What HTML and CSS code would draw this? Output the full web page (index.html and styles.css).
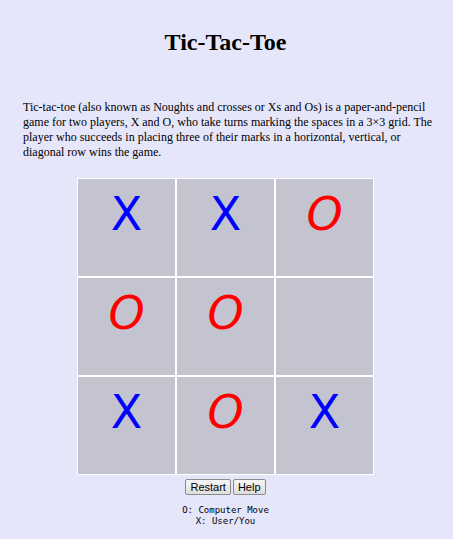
FILE: index.html
```html
<!DOCTYPE html>
<html>
<head>
<meta charset="utf-8">
<title>Tic-Tac-Toe</title>
<link rel="stylesheet" href="styles.css">
</head>
<body>
<h1 class="title">Tic-Tac-Toe</h1>
<p class="intro">Tic-tac-toe (also known as Noughts and crosses or Xs and Os) is a paper-and-pencil game for two players, X and O, who take turns marking the spaces in a 3×3 grid. The player who succeeds in placing three of their marks in a horizontal, vertical, or diagonal row wins the game.</p>
<div class="board">
  <div class="cell x">X</div>
  <div class="cell x">X</div>
  <div class="cell o">O</div>
  <div class="cell o">O</div>
  <div class="cell o">O</div>
  <div class="cell"></div>
  <div class="cell x">X</div>
  <div class="cell o">O</div>
  <div class="cell x">X</div>
</div>
<div class="controls">
  <button class="btn" type="button">Restart</button>
  <button class="btn" type="button">Help</button>
</div>
<div class="legend">
  <div>O: Computer Move</div>
  <div>X: User/You</div>
</div>
</body>
</html>
```
FILE: styles.css
```css
html {
  background: #e6e6fa;
}
body {
  margin: 0;
  padding: 8px 25px 8px 23px;
  font-family: "Liberation Serif", "Times New Roman", serif;
  font-size: 12px;
  color: #000;
  background: #e6e6fa;
}
.title {
  font-size: 24px;
  line-height: 30px;
  font-weight: bold;
  text-align: center;
  margin: 19px 0 43px;
}
.intro {
  margin: 0 -9px 18px 0;
  line-height: 15px;
}
.board {
  display: grid;
  grid-template-columns: repeat(3, 97px);
  grid-template-rows: repeat(3, 97px);
  gap: 2px;
  padding: 1px;
  background: #ffffff;
  width: max-content;
  margin: 0 auto;
}
.cell {
  background: #c4c4d0;
  font-family: "DejaVu Sans", Verdana, sans-serif;
  font-size: 46px;
  line-height: 46px;
  text-align: center;
  padding-top: 12px;
  box-sizing: border-box;
}
.x {
  color: #0000ff;
}
.o {
  color: #ff0000;
  font-style: italic;
}
.controls {
  display: flex;
  justify-content: center;
  gap: 2px;
  margin-top: 4px;
}
.btn {
  font-family: "Liberation Sans", Arial, sans-serif;
  font-size: 11px;
  line-height: 12px;
  height: 16px;
  padding: 0 4px;
  margin: 0;
  border: 1px solid #8a8a8a;
  border-radius: 2px;
  background: linear-gradient(#f6f6f6, #dedede);
  color: #000;
}
.legend {
  margin-top: 10px;
  font-family: "DejaVu Sans Mono", Consolas, monospace;
  font-size: 9px;
  line-height: 11px;
  text-align: center;
  color: #000;
}
```
